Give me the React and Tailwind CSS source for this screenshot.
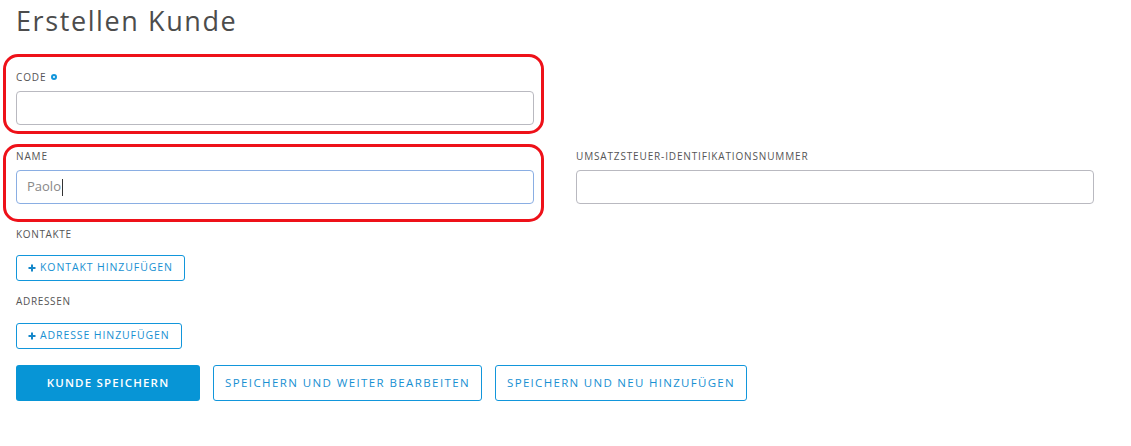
import React from 'react';

const font = { fontFamily: '"Open Sans", "Noto Sans", sans-serif' };

function Field({ label, required, value, focused, ring, className = '' }) {
  return (
    <div className={`relative flex flex-col ${className}`}>
      {/* annotation ring drawn over the field */}
      {ring}
      <div className="flex items-center gap-[5px] h-[14px] text-[10px] uppercase tracking-[0.85px] text-[#555]">
        {label}
        {required && <span className="w-[6px] h-[6px] rounded-full border-2 border-[#1296db]" />}
      </div>
      <div
        className={`mt-[7px] h-[34px] rounded-[4px] border bg-white flex items-center px-[10px] text-[13px] text-[#888] ${
          focused ? 'border-[#8aaee3]' : 'border-[#b9b9c0]'
        }`}
      >
        {value}
        {focused && <span className="ml-[1px] w-px h-[17px] bg-[#333]" />}
      </div>
    </div>
  );
}

function AddButton({ children }) {
  return (
    <button className="h-[26px] px-[11px] rounded-[3px] border border-[#1296db] text-[#1790d2] text-[10.5px] tracking-[0.9px] flex items-center gap-[4px] self-start">
      <svg width="8" height="8" viewBox="0 0 8 8">
        <path d="M4 0.5v7M0.5 4h7" stroke="#1587c9" strokeWidth="2" />
      </svg>
      {children}
    </button>
  );
}

export default function App() {
  return (
    <div className="w-[1131px] h-[446px] bg-white px-[16px] pt-[3px]" style={font}>
      <h1 className="text-[27px] leading-[36px] tracking-[1.6px] text-[#4c4c4c]">Erstellen Kunde</h1>

      <div className="mt-[31px] w-[518px]">
        <Field
          label="CODE"
          required
          ring={<div className="pointer-events-none absolute -left-[13px] -right-[10px] -top-[16px] -bottom-[9px] rounded-[15px] border-[3px] border-[#ee1119]" />}
        />
      </div>

      <div className="mt-[24px] flex gap-[42px]">
        <Field
          label="NAME"
          value="Paolo"
          focused
          className="w-[518px]"
          ring={<div className="pointer-events-none absolute -left-[13px] -right-[10px] -top-[5px] -bottom-[18px] rounded-[15px] border-[3px] border-[#ee1119]" />}
        />
        <Field label="UMSATZSTEUER-IDENTIFIKATIONSNUMMER" className="w-[518px]" />
      </div>

      <div className="mt-[23px] flex flex-col">
        <div className="text-[10px] uppercase tracking-[0.65px] text-[#555] h-[14px]">Kontakte</div>
        <div className="mt-[14px] flex">
          <AddButton>KONTAKT HINZUFÜGEN</AddButton>
        </div>
        <div className="mt-[13px] text-[10px] uppercase tracking-[0.65px] text-[#555] h-[14px]">Adressen</div>
        <div className="mt-[15px] flex">
          <AddButton>ADRESSE HINZUFÜGEN</AddButton>
        </div>
      </div>

      <div className="mt-[16px] flex gap-[13px]">
        <button className="h-[36px] w-[184px] rounded-[3px] bg-[#0795d6] text-white text-[11.5px] font-semibold tracking-[1.2px]">
          KUNDE SPEICHERN
        </button>
        <button className="h-[36px] px-[11px] rounded-[3px] border border-[#1296db] text-[#1790d2] text-[11.5px] tracking-[1.4px]">
          SPEICHERN UND WEITER BEARBEITEN
        </button>
        <button className="h-[36px] px-[11px] rounded-[3px] border border-[#1296db] text-[#1790d2] text-[11.5px] tracking-[1.3px]">
          SPEICHERN UND NEU HINZUFÜGEN
        </button>
      </div>
    </div>
  );
}
